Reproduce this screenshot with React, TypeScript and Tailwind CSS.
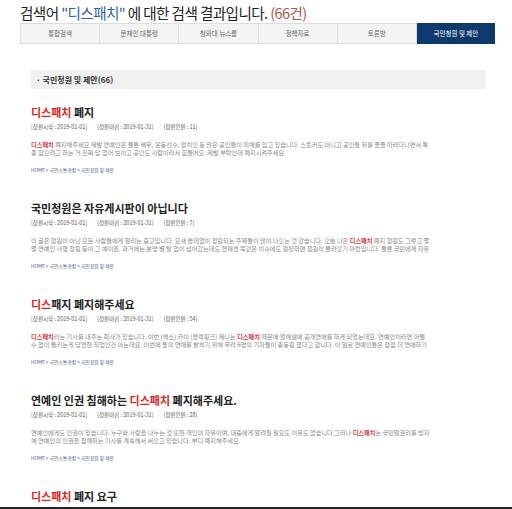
import React from "react";

const KR = { fontFamily: '"Noto Sans CJK KR", "Noto Sans", sans-serif' };

type Seg = { t: string; hl?: boolean };

const items: {
  title: Seg[];
  titleWeight: string;
  count: string;
  lines: Seg[][];
}[] = [
  {
    title: [{ t: "디스패치", hl: true }, { t: " 폐지" }],
    titleWeight: "font-bold",
    count: "11",
    lines: [
      [
        { t: "디스패치", hl: true },
        {
          t: " 폐지해주세요 제발 연예인은 물론 배우, 운동선수, 정치인 등 많은 공인들이 피해를 입고 있습니다. 스토커도 아니고 공인들 뒤를 졸졸 따라다니면서 특",
        },
      ],
      [{ t: "종 잡으려고 하는 거 진짜 답 없어 보이고 공인도 사람이라서 힘들어요. 제발 부탁인데 폐지시켜주세요" }],
    ],
  },
  {
    title: [{ t: "국민청원은 자유게시판이 아닙니다" }],
    titleWeight: "font-bold",
    count: "7",
    lines: [
      [
        {
          t: "이 글은 청원이 아닌 모든 사람들에게 알리는 충고입니다. 요새 쓸데없이 청원되는 주제들이 많이 나오는 것 같습니다. 오늘 나온 ",
        },
        { t: "디스패치", hl: true },
        { t: " 폐지 청원도 그렇고 몇" },
      ],
      [
        {
          t: "몇 연예인 사형 청원 등이 그 예이죠. 과거에는 분명 별 탈 없이 넘어갔는데도 현재엔 똑같은 이슈에도 걸핏하면 청원이 몰라오기 마련입니다. 물론 국민에게 자유",
        },
      ],
    ],
  },
  {
    title: [{ t: "디스", hl: true }, { t: "패지 폐지해주세요" }],
    titleWeight: "font-semibold",
    count: "54",
    lines: [
      [
        { t: "디스패치", hl: true },
        { t: "라는 기사를 내주는 회사가 있습니다. 이번 (엑소) 카이 (블랙핑크) 제니는 " },
        { t: "디스패치", hl: true },
        { t: " 때문에 열애설에 공개연애를 하게 되었는데요. 연예인이라면 어쩔" },
      ],
      [
        {
          t: "수 없이 들키는게 당연한 직업인건 아는데요. 이번에 둘의 연애를 밝히기 위해 무려 6명의 기자들이 총동원 했다고 합니다. 이 일로 연예인들은 점점 더 연애하기",
        },
      ],
    ],
  },
  {
    title: [
      { t: "연예인 인권 침해하는 " },
      { t: "디스패치", hl: true },
      { t: " 폐지해주세요." },
    ],
    titleWeight: "font-bold",
    count: "28",
    lines: [
      [
        {
          t: "연예인에게도 인권이 있습니다. 누구와 사랑을 나누는 것 또한 개인의 자유이며, 대중에게 알려질 필요도 이유도 없습니다 그러나 ",
        },
        { t: "디스패치", hl: true },
        { t: "는 국민알권리를 빙자" },
      ],
      [{ t: "해 연예인의 인권을 침해하는 기사를 계속해서 써오고 있습니다. 부디 폐지해주세요." }],
    ],
  },
];

const tabs = ["통합검색", "문재인 대통령", "청와대 뉴스룸", "정책자료", "토론방", "국민청원 및 제안"];

function Segs({ segs, hlClass }: { segs: Seg[]; hlClass: string }) {
  return (
    <>
      {segs.map((s, i) =>
        s.hl ? (
          <span key={i} className={hlClass}>
            {s.t}
          </span>
        ) : (
          <span key={i}>{s.t}</span>
        )
      )}
    </>
  );
}

export default function App() {
  return (
    <div className="w-[512px] h-[509px] overflow-hidden bg-white flex flex-col" style={KR}>
      <div className="flex-1 overflow-hidden px-[20px]">
        <div className="pt-[3px] h-[23px] text-[14.6px] leading-[20px] text-[#222] tracking-[-0.6px] whitespace-nowrap">
          검색어 <span className="text-[#2f5fae]">"디스패치"</span> 에 대한 검색 결과입니다.{" "}
          <span className="text-[#b4534b]">(66건)</span>
        </div>
        <div className="flex w-[475px] h-[21px] border border-[#dcdcdc] bg-[#f3f3f3]">
          {tabs.map((t, i) => (
            <div
              key={t}
              className={
                i === tabs.length - 1
                  ? "flex-1 flex items-center justify-center bg-[#0d3a6c] text-white text-[6.5px] -my-px -mr-px"
                  : "flex-1 flex items-center justify-center text-[#666] text-[6.5px] border-r border-[#dcdcdc]"
              }
            >
              {t}
            </div>
          ))}
        </div>
        <div className="ml-[11px] w-[455px]">
          <div className="mt-[26px] h-[19px] bg-[#f0f0f0] flex items-center pl-[5px] text-[8px] font-semibold text-[#333]">
            · 국민청원 및 제안(66)
          </div>
          <div className="mt-[16px] flex flex-col gap-[28px]">
            {items.map((it, idx) => (
              <div key={idx}>
                <div className={`h-[14px] leading-[14px] text-[11px] text-[#222] whitespace-nowrap ${it.titleWeight}`}>
                  <Segs segs={it.title} hlClass="text-[#e02424]" />
                </div>
                <div className="mt-[4px] h-[8px] leading-[8px] text-[5.5px] text-[#555] flex gap-[10px] whitespace-nowrap">
                  <span>[청원시작 : 2019-01-01]</span>
                  <span>[청원마감 : 2019-01-31]</span>
                  <span>[청원인원 : {it.count}]</span>
                </div>
                <div className="mt-[10px] text-[6.2px] leading-[8px] text-[#888]">
                  {it.lines.map((ln, j) => (
                    <div key={j} className="whitespace-nowrap overflow-hidden">
                      <Segs segs={ln} hlClass="text-[#d9363e] font-bold" />
                    </div>
                  ))}
                </div>
                <div className="mt-[10px] h-[6px] leading-[6px] text-[4.8px] text-[#3a5a8a] whitespace-nowrap">
                  HOME &gt; 국민소통광장 &gt; 국민청원 및 제안
                </div>
              </div>
            ))}
            <div>
              <div className="h-[14px] leading-[14px] text-[11px] text-[#222] font-bold whitespace-nowrap">
                <span className="text-[#e02424]">디스패치</span> 폐지 요구
              </div>
            </div>
          </div>
        </div>
      </div>
      <div className="h-[2px] bg-[#222] shrink-0" />
    </div>
  );
}
